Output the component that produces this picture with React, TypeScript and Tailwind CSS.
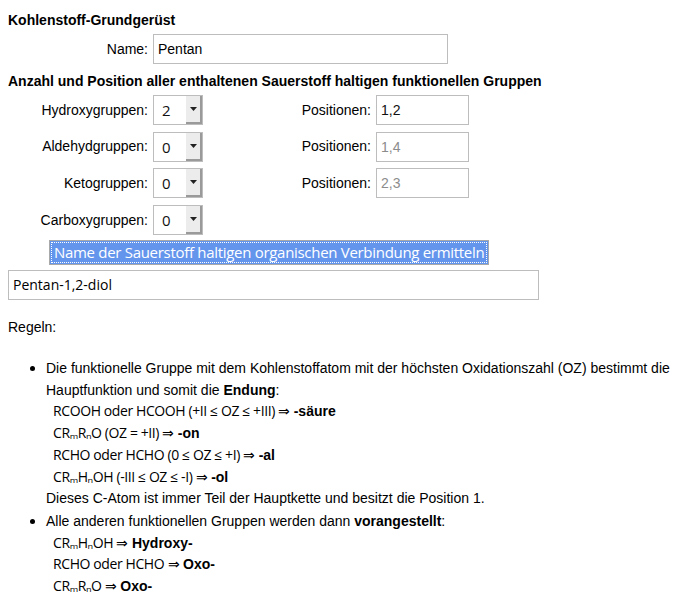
import React from 'react';

const sans = "font-['Liberation_Sans',Arial,sans-serif]";
const alt = "font-['Open_Sans','Noto_Sans',sans-serif]";

function Select({ value }: { value: string }) {
    return (
        <div className="flex h-[30px] w-[50px] border border-[#bdbdbd] bg-white">
            <span className={`flex-1 pl-[8px] leading-[28px] text-[15px] text-[#111] ${alt}`}>{value}</span>
            <span className="flex w-[16px] items-center justify-center border-r-2 border-b-2 border-[#9a9a9a] bg-[#ececec]">
                <svg width="7" height="4" viewBox="0 0 7 4"><path d="M0 0h7L3.5 4z" fill="#222" /></svg>
            </span>
        </div>
    );
}

function PosInput({ value, muted }: { value: string; muted?: boolean }) {
    return (
        <div className={`h-[30px] w-[93px] border border-[#bdbdbd] bg-white pl-[4px] leading-[28px] ${muted ? 'text-[#8c8c8c]' : 'text-[#111]'}`}>
            {value}
        </div>
    );
}

function Row({ label, value, pos, muted }: { label: string; value: string; pos?: string; muted?: boolean }) {
    return (
        <div className="flex items-center">
            <span className="w-[145px] pr-[5px] text-right">{label}</span>
            <Select value={value} />
            {pos !== undefined && (
                <>
                    <span className="w-[173px] pr-[5px] text-right">Positionen:</span>
                    <PosInput value={pos} muted={muted} />
                </>
            )}
        </div>
    );
}

const F = ({ children }: { children: React.ReactNode }) => (
    <span className={`text-[14px] leading-none tracking-[-0.4px] ${alt}`}>{children}</span>
);

export default function App() {
    const rules = [
        <><F>RCOOH oder HCOOH (+II ≤ OZ ≤ +III) ⇒</F> <b>-säure</b></>,
        <><F>CRₘRₙO (OZ = +II) ⇒</F> <b>-on</b></>,
        <><F>RCHO oder HCHO (0 ≤ OZ ≤ +I) ⇒</F> <b>-al</b></>,
        <><F>CRₘHₙOH (-III ≤ OZ ≤ -I) ⇒</F> <b>-ol</b></>,
    ];
    const prefixes = [
        <><F>CRₘHₙOH ⇒</F> <b>Hydroxy-</b></>,
        <><F>RCHO oder HCHO ⇒</F> <b>Oxo-</b></>,
        <><F>CRₘRₙO ⇒</F> <b>Oxo-</b></>,
    ];

    return (
        <div className={`min-h-screen bg-white text-[14px] text-black ${sans}`}>
            <div className="pl-[8px] pt-[11px]">
                <h1 className="font-bold leading-[18px]">Kohlenstoff-Grundgerüst</h1>
                <div className="mt-[5px] flex items-center">
                    <span className="w-[145px] pr-[5px] text-right">Name:</span>
                    <div className="h-[30px] w-[295px] border border-[#bdbdbd] pl-[4px] leading-[28px]">Pentan</div>
                </div>
                <h2 className="mt-[8px] font-bold leading-[18px]">Anzahl und Position aller enthaltenen Sauerstoff haltigen funktionellen Gruppen</h2>
                <div className="mt-[5px] flex flex-col gap-[6.7px]">
                    <Row label="Hydroxygruppen:" value="2" pos="1,2" />
                    <Row label="Aldehydgruppen:" value="0" pos="1,4" muted />
                    <Row label="Ketogruppen:" value="0" pos="2,3" muted />
                    <Row label="Carboxygruppen:" value="0" />
                </div>
                <div className="mt-[5px] pl-[41px]">
                    <button className={`border border-[#a9a9a9] bg-[#6495ed] p-[1px] text-[15px] font-medium tracking-[-0.3px] text-white ${alt}`}>
                        <span className="block border border-dotted border-white px-[2px] leading-[19px]">
                            Name der Sauerstoff haltigen organischen Verbindung ermitteln
                        </span>
                    </button>
                </div>
                <div className={`mt-[5px] h-[30px] w-[531px] border border-[#bdbdbd] pl-[4px] leading-[28px] text-[14px] ${alt}`}>Pentan-1,2-diol</div>
                <p className="mt-[18px] leading-[18px]">Regeln:</p>
                <ul className="mt-[21px] list-disc pl-[38px] leading-[21.7px] marker:text-[16px]">
                    <li>
                        Die funktionelle Gruppe mit dem Kohlenstoffatom mit der höchsten Oxidationszahl (OZ) bestimmt die Hauptfunktion und somit die <b>Endung</b>:
                        {rules.map((r, i) => (
                            <div key={i} className="h-[21.7px] pl-[7px]">{r}</div>
                        ))}
                        Dieses C-Atom ist immer Teil der Hauptkette und besitzt die Position 1.
                    </li>
                    <li>
                        Alle anderen funktionellen Gruppen werden dann <b>vorangestellt</b>:
                        {prefixes.map((r, i) => (
                            <div key={i} className="h-[21.7px] pl-[7px]">{r}</div>
                        ))}
                    </li>
                </ul>
            </div>
        </div>
    );
}
